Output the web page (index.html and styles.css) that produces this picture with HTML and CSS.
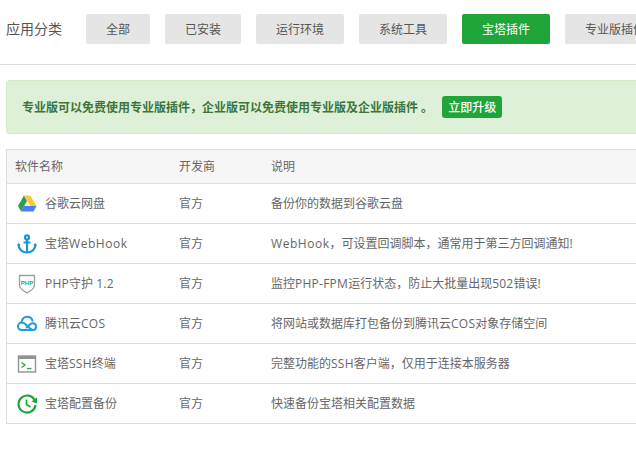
FILE: index.html
```html
<!DOCTYPE html>
<html lang="zh">
<head>
<meta charset="utf-8">
<title>应用分类</title>
<link rel="stylesheet" href="styles.css">
</head>
<body>
<nav class="cats">
  <span class="cats-label">应用分类</span>
  <a class="cat">全部</a>
  <a class="cat">已安装</a>
  <a class="cat">运行环境</a>
  <a class="cat">系统工具</a>
  <a class="cat cat-on">宝塔插件</a>
  <a class="cat">专业版插件</a>
</nav>
<div class="notice">
  <span class="notice-text">专业版可以免费使用专业版插件，企业版可以免费使用专业版及企业版插件 。</span>
  <a class="upgrade">立即升级</a>
</div>
<table class="soft">
  <thead>
    <tr><th class="c-name">软件名称</th><th class="c-dev">开发商</th><th>说明</th></tr>
  </thead>
  <tbody>
    <tr>
      <td><div class="name">
        <svg class="ico" viewBox="0 0 20 20"><path fill="#2e9d4e" d="M7 1.500 1 12l3 5.500L10 7z"/><path fill="#fcc934" d="M7 1.500h6.300L19.500 12h-6.200z"/><path fill="#4a80e8" d="M7 12H19.500l-3 5.500H4z"/></svg>
        <span>谷歌云网盘</span></div></td>
      <td>官方</td><td>备份你的数据到谷歌云盘</td>
    </tr>
    <tr>
      <td><div class="name">
        <svg class="ico" viewBox="0 0 20 20" fill="none" stroke="#1c97d5" stroke-width="2.200"><circle cx="10" cy="3.400" r="2"/><path d="M10 5.500V18.500M6.500 8.500h7"/><path d="M1.500 10.500c0 5 4 8 8.500 8s8.500-3 8.500-8"/><path fill="#1c97d5" stroke="none" d="M0 11.500 1.800 8.800 3.700 11.500zM16.300 11.500 18.200 8.800 20 11.500z"/></svg>
        <span>宝塔<span class="wide">WebHook</span></span></div></td>
      <td>官方</td><td><span class="wide">WebHook</span>，可设置回调脚本，通常用于第三方回调通知!</td>
    </tr>
    <tr>
      <td><div class="name">
        <svg class="ico" viewBox="0 0 20 20"><path fill="#fff" stroke="#9a9f9c" stroke-width="1.300" d="M2.500 1.500h15V11c0 3.500-3.500 5.800-7.500 7.800C6 16.800 2.500 14.500 2.500 11z"/><text class="php" x="10" y="10.500" text-anchor="middle">PHP</text></svg>
        <span><span class="wide-s">PHP</span>守护 <span class="wide-s">1.2</span></span></div></td>
      <td>官方</td><td>监控<span class="wide-s">PHP-FPM</span>运行状态，防止大批量出现<span class="wide-s">502</span>错误!</td>
    </tr>
    <tr>
      <td><div class="name">
        <svg class="ico" viewBox="0 0 20 20" fill="none" stroke="#1f9be0" stroke-width="2"><path d="M5 16C2.500 16 1 14.300 1 12.300c0-2.100 1.700-3.800 3.900-3.800 1.800 0 3 1 4.500 2.500l3.200 3C14 15.300 14.800 16 16 16"/><path d="M5 16h11c1.800 0 3-1.500 3-3.300 0-2-1.400-3.400-3.400-3.400-1.600 0-2.600 1-4 2.200L9 14M4.500 8.500C5 5 7.300 2.700 10.300 2.700c2.700 0 4.900 2 5.400 4.700"/></svg>
        <span>腾讯云<span class="wide-s">COS</span></span></div></td>
      <td>官方</td><td>将网站或数据库打包备份到腾讯云<span class="wide-s">COS</span>对象存储空间</td>
    </tr>
    <tr>
      <td><div class="name">
        <svg class="ico" viewBox="0 0 20 20" fill="none"><rect x="1.500" y="2" width="17" height="16" fill="#fff" stroke="#8f9492" stroke-width="1.400"/><rect x="1.500" y="2" width="17" height="3" fill="#8f9492"/><path stroke="#2f9e50" stroke-width="1.300" d="M4.500 8.500 8 11 4.500 13.500"/><path stroke="#2f9e50" stroke-width="1.300" d="M10 14.500h4.500"/></svg>
        <span>宝塔<span class="wide-s">SSH</span>终端</span></div></td>
      <td>官方</td><td>完整功能的<span class="wide-s">SSH</span>客户端，仅用于连接本服务器</td>
    </tr>
    <tr>
      <td><div class="name">
        <svg class="ico" viewBox="0 0 20 20" fill="none" stroke="#20a53a" stroke-width="2.200"><path d="M17.800 6.500A8.500 8.500 0 1 0 18.500 11"/><path stroke-width="1.800" d="M9.500 5.500V10.500L13.500 13"/><path fill="#20a53a" stroke="none" d="M14.500 7.500 20 3.500V9.500z"/></svg>
        <span>宝塔配置备份</span></div></td>
      <td>官方</td><td>快速备份宝塔相关配置数据</td>
    </tr>
  </tbody>
</table>
</body>
</html>
```
FILE: styles.css
```css
html, body {
  margin: 0;
  height: 100%;
  overflow: hidden;
  background: #fff;
}
body {
  width: 636px;
  font: 12px/1.4 "Open Sans", "Noto Sans CJK SC", sans-serif;
  color: #666;
}
.cats {
  display: flex;
  align-items: center;
  gap: 15px;
  height: 58px;
  padding: 0 0 6px 6px;
  border-bottom: 1px solid #ddd;
  white-space: nowrap;
}
.cats-label {
  width: 65px;
  margin-right: 0;
  flex: none;
  font-size: 14px;
  color: #555;
}
.cat {
  flex: none;
  height: 30px;
  line-height: 32px;
  padding: 0 20px;
  background: #e5e5e5;
  border-radius: 2px;
  color: #555;
}
.cat-on {
  background: #20a53a;
  color: #fff;
}
.notice {
  display: flex;
  align-items: center;
  gap: 9px;
  box-sizing: border-box;
  height: 54px;
  margin: 15px 0 15px 6px;
  padding: 0 15px;
  background: #dff0d8;
  border: 1px solid #d6e9c6;
  border-right: 0;
  border-radius: 4px 0 0 4px;
  color: #3c763d;
  font-weight: 700;
  white-space: nowrap;
}
.notice-text {
  padding-top: 2px;
}
.upgrade {
  padding: 0 6px;
  height: 22px;
  line-height: 24px;
  background: #20a53a;
  border-radius: 3px;
  color: #fff;
  font-weight: 500;
}
.soft {
  width: 640px;
  margin-left: 6px;
  border-collapse: collapse;
  table-layout: fixed;
  border-left: 1px solid #ddd;
}
.soft th, .soft td {
  padding: 2px 8px 0;
  border-top: 1px solid #ddd;
  border-bottom: 1px solid #ddd;
  text-align: left;
  font-weight: 400;
  white-space: nowrap;
}
.soft th {
  height: 31px;
  background: #f6f6f6;
}
.soft td {
  height: 37px;
}
.c-name { width: 148px; }
.c-dev { width: 76px; }
.name {
  display: flex;
  align-items: center;
  gap: 8px;
  margin-left: 2px;
}
.ico {
  flex: none;
  width: 20px;
  height: 20px;
  margin-top: -2px;
  margin-bottom: 0;
}
.wide {
  letter-spacing: .55px;
}
.wide-s {
  letter-spacing: .25px;
}
.php {
  font: 700 6px "Liberation Sans", sans-serif;
  fill: #35a852;
}
```
